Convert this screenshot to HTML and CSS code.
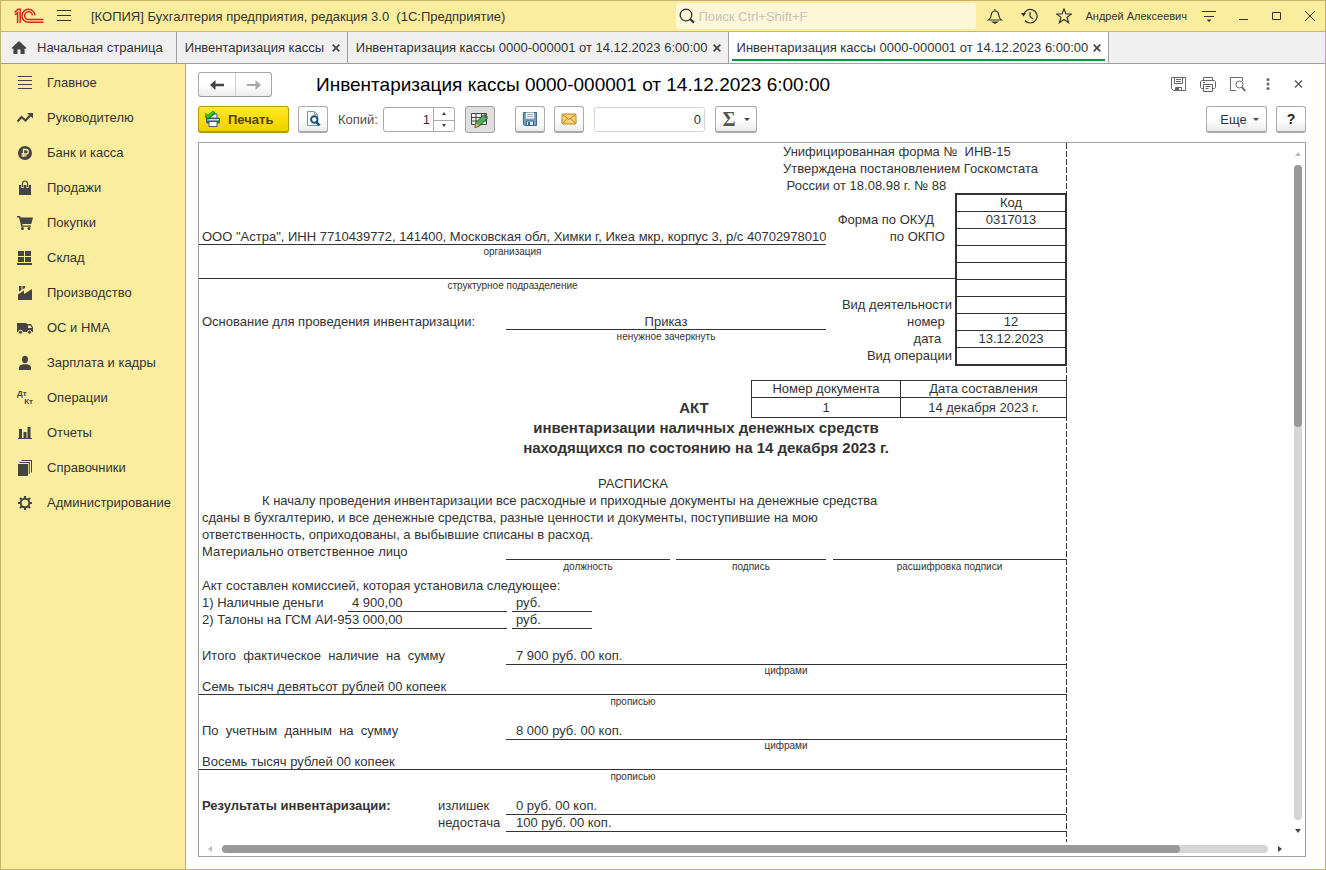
FILE: index.html
```html
<!DOCTYPE html>
<html lang="ru">
<head>
<meta charset="utf-8">
<title>Инвентаризация кассы</title>
<link rel="stylesheet" href="styles.css">
</head>
<body>
<header class="titlebar">
  <svg class="logo" width="30" height="16" viewBox="0 0 30 16" fill="none" stroke="#d8261c" stroke-width="1.5"><path d="M.5 4.500 4 1.200h2.200V15M1 6.800l2.600-2.200V15"/><path d="M21 7.600A6.500 6.500 0 1 0 14.600 14.300H29.500"/><path d="M18.400 7.400a3.900 3.900 0 1 0-3.900 4.100h15"/></svg>
  <button class="bare menu" aria-label="Меню"><svg width="14" height="12" viewBox="0 0 14 12" stroke="#333"><path d="M0 .5h14M0 5.500h14M0 10.500h14"/></svg></button>
  <div class="app-name">[КОПИЯ] Бухгалтерия предприятия, редакция 3.0&nbsp; (1С:Предприятие)</div>
  <label class="search">
    <svg width="16" height="16" viewBox="0 0 16 16" fill="none" stroke="#333"><circle cx="7" cy="7" r="5.800" stroke-width="1.300"/><path d="m11 11 4 3.600" stroke-width="2.200"/></svg>
    <input type="text" placeholder="Поиск Ctrl+Shift+F" aria-label="Поиск">
  </label>
  <div class="title-tools">
    <button class="bare" aria-label="Уведомления"><svg width="16" height="16" viewBox="0 0 16 16" fill="none" stroke="#333" stroke-width="1.2"><path d="M1.500 12c2-1.300 2.600-3 2.800-5C4.500 4.500 5.500 3 8 3s3.500 1.500 3.700 4c.2 2 .8 3.700 2.800 5zM8 3V1"/><path d="M6 14h4l-2 1.200z" fill="#333"/></svg></button>
    <button class="bare" aria-label="История"><svg width="17" height="16" viewBox="0 0 17 16" fill="none" stroke="#333" stroke-width="1.2"><path d="M2.500 7.500A6.800 6.800 0 1 1 4 12.500M9 4v4.500l3 2.500"/><path d="M0 5h5L2.500 8.500z" fill="#333" stroke="none"/></svg></button>
    <button class="bare" aria-label="Избранное"><svg width="16" height="16" viewBox="0 0 16 16" fill="none" stroke="#333" stroke-width="1.200"><path d="m8 1 2 5h5.300L11 9.400l1.600 5.300L8 11.500l-4.600 3.200L5 9.400.7 6H6z"/></svg></button>
    <span class="user">Андрей Алексеевич</span>
    <button class="bare" aria-label="Настройки"><svg width="14" height="14" viewBox="0 0 14 14" stroke="#333"><path d="M0 2.500h14M2 7.500h10"/><path d="M4.500 10.500h5L7 13z" fill="#333" stroke="none"/></svg></button>
    <button class="bare win" aria-label="Свернуть"><svg width="10" height="10" viewBox="0 0 10 10" stroke="#333"><path d="M0 8.500h9"/></svg></button>
    <button class="bare win" aria-label="Развернуть"><svg width="10" height="10" viewBox="0 0 10 10" fill="none" stroke="#333"><path d="M.5 1.500h8v7h-8z"/></svg></button>
    <button class="bare win" aria-label="Закрыть"><svg width="10" height="10" viewBox="0 0 10 10" stroke="#333"><path d="m0 0 10 10M10 0 0 10"/></svg></button>
  </div>
</header>

<nav class="tabs">
  <a class="tab home" href="#"><svg width="16" height="14" viewBox="0 0 16 14" fill="#444"><path d="M8 0 15.500 7l-1 1-.9-.8V13H9.500V8.500h-3V13H2.400V7.200l-.9.8-1-1z"/></svg>Начальная страница</a>
  <div class="tab"><a href="#">Инвентаризация кассы</a><button class="bare close" aria-label="Закрыть вкладку"><svg width="8" height="8" viewBox="0 0 8 8" stroke="#444" stroke-width="1.700"><path d="m.7.700 6.600 6.600M7.300.700.700 7.300"/></svg></button></div>
  <div class="tab"><a href="#">Инвентаризация кассы 0000-000001 от 14.12.2023 6:00:00</a><button class="bare close" aria-label="Закрыть вкладку"><svg width="8" height="8" viewBox="0 0 8 8" stroke="#444" stroke-width="1.700"><path d="m.7.700 6.600 6.600M7.300.700.700 7.300"/></svg></button></div>
  <div class="tab active"><a href="#">Инвентаризация кассы 0000-000001 от 14.12.2023 6:00:00</a><button class="bare close" aria-label="Закрыть вкладку"><svg width="8" height="8" viewBox="0 0 8 8" stroke="#444" stroke-width="1.700"><path d="m.7.700 6.600 6.600M7.300.700.700 7.300"/></svg></button></div>
</nav>

<div class="workspace">
  <nav class="sidebar">
    <a href="#"><svg viewBox="0 0 16 16" stroke="#444"><path d="M1 1.500h14M1 5.500h14M1 9.500h14M1 13.500h14"/></svg>Главное</a>
    <a href="#"><svg viewBox="0 0 16 16" fill="none" stroke="#444" stroke-width="2.200"><path d="m.5 11.500 4-4.500 4 3.500 5-5.500"/><path d="M10 3h6v5.500z" fill="#444" stroke="none"/></svg>Руководителю</a>
    <a href="#"><svg viewBox="0 0 16 16"><circle cx="8" cy="8" r="7" fill="#444"/><path d="M6.500 12V4.500H9a2.200 2.200 0 0 1 0 4.500H4.500M4.500 10.800h5" fill="none" stroke="#fbed9e" stroke-width="1.300"/></svg>Банк и касса</a>
    <a href="#"><svg viewBox="0 0 16 16"><path d="M2 5h12v10H2z" fill="#444"/><path d="M5.500 8V3.500a2.500 2.500 0 0 1 5 0V8" fill="none" stroke="#fbed9e" stroke-width="2.400"/><path d="M5.500 7V3.500a2.500 2.500 0 0 1 5 0V7" fill="none" stroke="#444" stroke-width="1.200"/></svg>Продажи</a>
    <a href="#"><svg viewBox="0 0 16 16" fill="#444"><path d="M0 1h3l.6 1.500H16L14.300 9H5.200l.4 1.400H14v1.400H4.300L2 2.400H0z"/><circle cx="5.500" cy="13.500" r="1.500"/><circle cx="12" cy="13.500" r="1.500"/></svg>Покупки</a>
    <a href="#"><svg viewBox="0 0 16 16" fill="#444"><path d="M1 1h6v5H1zM8 1h6v5H8zM1 7h6v5H1zM8 7h6v5H8zM0 13h15v2H0z"/></svg>Склад</a>
    <a href="#"><svg viewBox="0 0 16 16" fill="#444"><path d="M1 15V9.500L7 5.500V9l8-5v11zM2 1h2.500v4L2 6.500zM5.500 1H8v2L5.500 4.500z"/></svg>Производство</a>
    <a href="#"><svg viewBox="0 0 16 16" fill="#444"><path d="M0 3h9.500v1H14l2 3.500V12H0z"/><path d="M11 5.500h2.500L15 8h-4z" fill="#fbed9e"/><circle cx="3.500" cy="12.200" r="2" stroke="#fbed9e"/><circle cx="12.500" cy="12.200" r="2" stroke="#fbed9e"/></svg>ОС и НМА</a>
    <a href="#"><svg viewBox="0 0 16 16" fill="#444"><ellipse cx="8" cy="4.500" rx="3" ry="3.700"/><path d="M2 15v-2.500C2 10.500 4 10 6 9.300h4c2 .7 4 1.200 4 3.200V15z"/></svg>Зарплата и кадры</a>
    <a href="#"><span class="dtkt"><b>Дт</b><b>Кт</b></span>Операции</a>
    <a href="#"><svg viewBox="0 0 16 16" fill="#444"><path d="M2 4h3v9H2zM6.500 7h3v6h-3zM10.500 2h3v11h-3zM1 13h14v1H1z"/></svg>Отчеты</a>
    <a href="#"><svg viewBox="0 0 16 16" fill="#444"><path d="M1 4h10v12H1zM2.500 2h10.300v12h-1V3H2.500zM4.500 0H15v12.500h-1V1H4.500z"/></svg>Справочники</a>
    <a href="#"><svg viewBox="0 0 16 16" fill="none" stroke="#444"><circle cx="8" cy="8" r="4.300" stroke-width="2"/><path d="M8 1v2.500M8 12.500V15M1 8h2.500M12.500 8H15M3 3l1.800 1.800M11.200 11.200 13 13M13 3l-1.800 1.800M4.800 11.200 3 13" stroke-width="2.200"/></svg>Администрирование</a>
  </nav>

  <main class="content">
    <div class="heading">
      <div class="history">
        <button aria-label="Назад"><svg width="14" height="10" viewBox="0 0 14 10"><path d="M0 5 5.500 0v3.700H14v2.600H5.500V10z" fill="#444"/></svg></button>
        <button aria-label="Вперед"><svg width="14" height="10" viewBox="0 0 14 10"><path d="M14 5 8.500 0v4H0v2h8.500v4z" fill="#aaa"/></svg></button>
      </div>
      <h1>Инвентаризация кассы 0000-000001 от 14.12.2023 6:00:00</h1>
      <div class="page-tools">
        <button class="bare" aria-label="Сохранить"><svg width="16" height="16" viewBox="0 0 16 16" fill="none" stroke="#666"><path d="M1.500.5h14v13h-12l-2-2zM4.500.5v6h8v-6M6 2.500h5M6 4.500h5M5.500 13.500v-3h6v3"/><path d="M6 11h3v3H6z" fill="#666" stroke="none"/></svg></button>
        <button class="bare" aria-label="Печать"><svg width="16" height="16" viewBox="0 0 16 16" fill="none" stroke="#666"><path d="M3.500 3.500v-3h9v3M3.500 11.500h-2l-1-1v-6l1-1h13l1 1v6l-1 1h-2"/><path d="M3.500 7.500h9v7h-9zM5.500 9.500h5M5.500 11.500h3M3 5.500h2"/></svg></button>
        <button class="bare" aria-label="Просмотр"><svg width="16" height="16" viewBox="0 0 16 16" fill="none" stroke="#666"><path d="M6 13.500H.5V.5h12V4"/><circle cx="9.500" cy="7.500" r="3.500"/><path d="m12 10 3 4" stroke-width="1.800"/></svg></button>
        <button class="bare" aria-label="Ещё"><svg width="16" height="16" viewBox="0 0 16 16" fill="#666"><circle cx="8" cy="2.500" r="1.500"/><circle cx="8" cy="7" r="1.500"/><circle cx="8" cy="11.500" r="1.500"/></svg></button>
        <button class="bare" aria-label="Закрыть"><svg width="16" height="16" viewBox="0 0 16 16" stroke="#555" stroke-width="1.200"><path d="m5 3.500 7 7M12 3.500l-7 7"/></svg></button>
      </div>
    </div>

    <div class="toolbar">
      <button class="btn print"><svg width="16" height="16" viewBox="0 0 16 16"><path d="M4 6V3h8v4" fill="#fff" stroke="#3d607c"/><rect x="1" y="6.500" width="14" height="6" rx="1.500" fill="#3d607c"/><path d="M2 8h12v1.500H2z" fill="#c8dbe8"/><path d="M4 10.500h8v5H4z" fill="#fff" stroke="#3d607c"/><path d="M0 3.500 3 6.500 9.500.8" fill="none" stroke="#167a12" stroke-width="3.600"/><path d="M.8 3.500 3 5.800 8.800 1" fill="none" stroke="#35c82b" stroke-width="2"/></svg>Печать</button>
      <button class="btn icon" aria-label="Предварительный просмотр"><svg width="16" height="16" viewBox="0 0 16 16" fill="none"><path d="M2.500.5h7l3 3v11h-10z" fill="#fff" stroke="#7b96a8"/><path d="M9.500.5v3h3" stroke="#7b96a8"/><circle cx="9.300" cy="8.500" r="3.200" fill="#fff" stroke="#11507c" stroke-width="2"/><path d="m11.500 11 3 3.500" stroke="#11507c" stroke-width="2.600"/></svg></button>
      <label class="copies-label" for="copies">Копий:</label>
      <div class="spinner"><input id="copies" type="text" value="1"><div class="steps"><button aria-label="Больше"><svg width="4" height="3" viewBox="0 0 4 3"><path d="M0 3 2 0l2 3z" fill="#444"/></svg></button><button aria-label="Меньше"><svg width="4" height="3" viewBox="0 0 4 3"><path d="m0 0 2 3 2-3z" fill="#444"/></svg></button></div></div>
      <button class="btn icon pressed" aria-label="Редактирование"><svg width="17" height="16" viewBox="0 0 17 16"><path d="M.5 1.500h15v11H.5zM.5 5.500h15M.5 9h15M5 1.500v11M10.500 1.500v11" fill="#eee" stroke="#444"/><path d="m5 10.500 7.500-7.500 3.500 3.500-7.500 7.500-4.500 1.500z" fill="#4caf50" stroke="#17603a"/><path d="m5 10.500 3.500 3.500L4 15.500z" fill="#e9b57a" stroke="#8a5a2a" stroke-width=".6"/><path d="m12.500 3 1.500-1.200L17 5l-1 1.500z" fill="#555"/></svg></button>
      <button class="btn icon save" aria-label="Сохранить файл"><svg width="16" height="16" viewBox="0 0 16 16"><path d="M1.500 1.500h13v13h-12l-1-1z" fill="#6f9fce" stroke="#3e6790"/><path d="M4 1.500h8v6H4z" fill="#fff"/><path d="M5 3.500h6M5 5.500h6" stroke="#9ab"/><path d="M4.500 10h7v4.500h-7z" fill="#dce8f2" stroke="#3e6790"/><path d="M6 11h2v3H6z" fill="#3e6790"/></svg></button>
      <button class="btn icon" aria-label="Отправить по почте"><svg width="16" height="12" viewBox="0 0 16 12"><rect x="1" y="1" width="14" height="10" rx="1" fill="#fbd377" stroke="#c17f16"/><path d="m1.500 1.500 6.500 5 6.500-5M1.500 10.500 6 5.500M14.500 10.500 10 5.500" fill="none" stroke="#c17f16"/></svg></button>
      <input class="sum" type="text" value="0" aria-label="Сумма выделенных ячеек">
      <button class="btn sigma" aria-label="Вычислить сумму"><span class="sigma-sign">Σ</span><svg width="6" height="3" viewBox="0 0 6 3"><path d="M0 0h6L3 3z" fill="#444"/></svg></button>
      <button class="btn more">Еще<svg width="6" height="3" viewBox="0 0 6 3"><path d="M0 0h6L3 3z" fill="#444"/></svg></button>
      <button class="btn icon help">?</button>
    </div>

    <div class="viewer">
      <div class="viewport">
        <article class="sheet">
          <div class="approval">Унифицированная форма №&nbsp; ИНВ-15<br>Утверждена постановлением Госкомстата<br>&nbsp;России от 18.08.98 г. № 88</div>
          <section class="form-head">
            <div class="head-grid">
              <span class="c3 r2 right">Форма по ОКУД     </span>
              <span class="wide r3 line clip">ООО "Астра", ИНН 7710439772, 141400, Московская обл, Химки г, Икеа мкр, корпус 3, р/с 40702978010</span>
              <span class="c3 r3 right">по ОКПО  </span>
              <small class="wide r4">организация</small>
              <span class="full r5 line"></span>
              <small class="wide r6">структурное подразделение</small>
              <span class="c3 r7 right">Вид деятельности</span>
              <span class="c1 r8">Основание для проведения инвентаризации:</span>
              <span class="c2 r8 line center">Приказ</span>
              <span class="c3 r8 right">номер  </span>
              <small class="c2 r9">ненужное зачеркнуть</small>
              <span class="c3 r9 right">дата   </span>
              <span class="c3 r10 right">Вид операции</span>
            </div>
            <table class="codes">
              <tr><th>Код</th></tr><tr><td>0317013</td></tr><tr><td></td></tr><tr><td></td></tr><tr><td></td></tr><tr><td></td></tr><tr><td></td></tr><tr><td>12</td></tr><tr><td>13.12.2023</td></tr><tr><td></td></tr>
            </table>
          </section>

          <section class="act">
            <h2>АКТ</h2>
            <table class="docnum">
              <tr><th>Номер документа</th><th>Дата составления</th></tr>
              <tr><td>1</td><td>14 декабря 2023 г.</td></tr>
            </table>
          </section>
          <h2 class="subject">инвентаризации наличных денежных средств<br>находящихся по состоянию на 14 декабря 2023 г.</h2>

          <h3>РАСПИСКА</h3>
          <p class="receipt">К началу проведения инвентаризации все расходные и приходные документы на денежные средства<br>сданы в бухгалтерию, и все денежные средства, разные ценности и документы, поступившие на мою<br>ответственность, оприходованы, а выбывшие списаны в расход.</p>
          <div class="row sign"><span>Материально ответственное лицо</span><span class="line"></span><span class="line"></span><span class="line"></span></div>
          <div class="row sign notes"><small></small><small>должность</small><small>подпись</small><small>расшифровка подписи</small></div>
          <p>Акт составлен комиссией, которая установила следующее:</p>
          <div class="row item"><span>1) Наличные деньги</span><span class="line">4 900,00</span><span class="line">руб.</span></div>
          <div class="row item"><span>2) Талоны на ГСМ АИ-95</span><span class="line">3 000,00</span><span class="line">руб.</span></div>

          <div class="row total first"><span>Итого  фактическое  наличие  на  сумму</span><span class="line">7 900 руб. 00 коп.</span></div>
          <div class="row total notes"><small></small><small>цифрами</small></div>
          <div class="row words line">Семь тысяч девятьсот рублей 00 копеек</div>
          <small class="note">прописью</small>

          <div class="row total"><span>По  учетным  данным  на  сумму</span><span class="line">8 000 руб. 00 коп.</span></div>
          <div class="row total notes"><small></small><small>цифрами</small></div>
          <div class="row words line">Восемь тысяч рублей 00 копеек</div>
          <small class="note">прописью</small>

          <div class="row result"><b>Результаты инвентаризации:</b><span>излишек</span><span class="line">0 руб. 00 коп.</span></div>
          <div class="row result"><b></b><span>недостача</span><span class="line">100 руб. 00 коп.</span></div>
        </article>
      </div>
      <div class="vscroll"><svg width="6" height="4" viewBox="0 0 6 4"><path d="m0 4 3-4 3 4z" fill="#bbb"/></svg><div class="track"><div class="thumb"></div></div><svg width="6" height="4" viewBox="0 0 6 4"><path d="M0 0h6L3 4z" fill="#444"/></svg></div>
      <div class="hscroll"><svg width="4" height="6" viewBox="0 0 4 6"><path d="M4 0v6L0 3z" fill="#bbb"/></svg><div class="track"><div class="thumb"></div></div><svg width="4" height="6" viewBox="0 0 4 6"><path d="M0 0v6l4-3z" fill="#444"/></svg></div>
    </div>
  </main>
</div>
</body>
</html>
```
FILE: styles.css
```css
* { box-sizing: border-box; }
body { margin: 0; height: 100vh; display: flex; flex-direction: column; overflow: hidden; border: 1px solid #c3b66c; background: #fff; color: #333; font: 13px "Liberation Sans", Arial, sans-serif; }
button, input { font: inherit; color: inherit; }
button { padding: 0; }
a { color: inherit; text-decoration: none; }
svg { display: block; flex: none; }
h1, h2, h3, p { margin: 0; font-weight: normal; font-size: 13px; }
.bare { border: 0; background: none; display: flex; align-items: center; justify-content: center; }

.titlebar { display: flex; align-items: center; height: 31px; flex: none; background: #fbed9e; border-bottom: 1px solid #c8b66a; padding: 0 10px 0 13px; white-space: nowrap; }
.menu { margin-left: 13px; }
.app-name { margin-left: 20px; flex: 1; font-size: 13px; }
.search { display: flex; align-items: center; gap: 3px; width: 300px; height: 26px; padding-left: 3px; background: #fdf6d7; border-radius: 3px; }
.search input { border: 0; background: none; outline: 0; flex: 1; min-width: 0; padding: 0; }
.search input::placeholder { color: #c6c4bd; }
.title-tools { display: flex; align-items: center; gap: 18px; margin-left: 11px; }
.user { font-size: 11px; margin: 0 -3px 0 -5px; }
.win { width: 10px; margin-left: 5px; }

.tabs { display: flex; height: 32px; flex: none; background: #f0f0f0; border-bottom: 1px solid #a0a0a0; white-space: nowrap; }
.tab { display: flex; align-items: center; justify-content: space-between; gap: 5px; min-width: 171px; padding: 0 7px 0 8px; border-right: 1px solid #a0a0a0; }
.tab.home { gap: 10px; padding: 0 13px 0 10px; }
.tab.active { background: #fff; position: relative; }
.tab.active::after { content: ""; position: absolute; left: 3px; right: 3px; bottom: 2px; height: 2px; background: #009646; }

.workspace { flex: 1; display: flex; min-height: 0; }
.sidebar { width: 185px; flex: none; background: #fbed9e; border-right: 1px solid #c0b060; padding-top: 1px; }
.sidebar a { display: flex; align-items: center; gap: 14px; height: 35px; padding-left: 16px; white-space: nowrap; }
.sidebar svg { width: 16px; height: 16px; }
.dtkt { width: 16px; font-size: 8px; line-height: 8px; color: #444; }
.dtkt b { display: block; }
.dtkt b + b { text-align: right; }

.content { flex: 1; min-width: 0; display: flex; flex-direction: column; padding: 8px 19px 12px 12px; }
.heading { display: flex; align-items: center; height: 25px; }
.history { display: flex; border: 1px solid #a8a8a8; border-bottom-color: #999; border-radius: 3px; height: 25px; background: linear-gradient(#fff, #fff 50%, #ececec); }
.history button { width: 36px; border: 0; background: none; display: flex; align-items: center; justify-content: center; }
.history button + button { border-left: 1px solid #d0d0d0; }
h1 { margin-left: 44px; flex: 1; font-size: 19px; color: #000; white-space: nowrap; }
.page-tools { display: flex; gap: 14px; }

.toolbar { display: flex; align-items: center; margin: 9px 0 9px; height: 27px; }
.btn { display: flex; align-items: center; justify-content: center; height: 27px; border: 1px solid #ababab; border-bottom: 2px solid #a8a8a8; border-radius: 3px; background: linear-gradient(#fff, #fff 50%, #ececec); }
.icon { width: 30px; margin-left: 9px; }
.print { width: 91px; gap: 7px; justify-content: flex-start; padding-left: 6px; border-color: #b39e00; background: linear-gradient(#ffe633, #fadb00 60%, #ecd000); font-weight: bold; color: #4d4610; }
.copies-label { margin: 0 5px 0 10px; color: #4d4d4d; }
.spinner { display: flex; width: 72px; height: 25px; border: 1px solid #aaa; border-radius: 3px; }
.spinner input { flex: 1; min-width: 0; border: 0; padding: 0 3px; background: none; text-align: right; outline: 0; }
.steps { width: 21px; border-left: 1px solid #aaa; display: grid; grid-template-rows: 1fr 1fr; }
.steps button { border: 0; background: none; display: flex; align-items: center; justify-content: center; }
.steps button + button { border-top: 1px solid #aaa; }
.pressed { background: #dfdfdf; border: 1px solid #a0a0a0; margin-left: 10px; }
.save { margin-left: 20px; }
.sum { width: 111px; height: 25px; margin-left: 10px; border: 1px solid #d5d5d5; border-radius: 3px; padding: 0 3px; text-align: right; background: #fff; }
.sigma { width: 42px; margin-left: 10px; gap: 8px; }
.sigma-sign { font: bold 20px "Liberation Serif", serif; color: #555; }
.more { width: 61px; margin-left: auto; gap: 6px; padding-left: 6px; }
.help { font-weight: bold; font-size: 14px; color: #222; }

.viewer { flex: 1; min-height: 0; display: grid; grid-template: minmax(0, 1fr) 14px / minmax(0, 1fr) 15px; border: 1px solid #a0a0a0; }
.viewport { overflow: hidden; }
.vscroll { display: flex; flex-direction: column; align-items: center; padding: 9px 0; gap: 9px; }
.vscroll .track { width: 8px; flex: 1; }
.vscroll .thumb { height: 40%; }
.hscroll { grid-column: 1 / 3; display: flex; align-items: center; padding: 0 23px 0 9px; gap: 10px; }
.hscroll .track { height: 8px; flex: 1; }
.hscroll .thumb { width: 91.6%; height: 8px; }
.track { background: #d5d5d5; border-radius: 4px; }
.thumb { background: #999; border-radius: 4px; }

.sheet { width: 868px; min-height: 100%; line-height: 17px; white-space: pre; background: repeating-linear-gradient(#333 0 6px, #fff 6px 8px) right top / 1px 100% no-repeat; display: flex; flex-direction: column; }
.sheet small { font-size: 10px; line-height: 14px; text-align: center; display: block; }
.sheet p { padding-left: 3px; }
.line { border-bottom: 1px solid #333; }
.center { text-align: center; }
.right { text-align: right; padding-right: 4px; }
.clip { overflow: hidden; padding-left: 3px; }
.approval { padding-left: 584px; }

.form-head { display: grid; grid-template-columns: 757px 112px; align-items: start; }
.head-grid { display: grid; grid-template: repeat(10, 17px) / 307px 320px 1fr; }
.c1 { grid-column: 1; padding-left: 3px; }
.c2 { grid-column: 2; }
.c3 { grid-column: 3; }
.wide { grid-column: 1 / 3; }
.full { grid-column: 1 / 4; }
.r2 { grid-row: 2; } .r3 { grid-row: 3; } .r4 { grid-row: 4; } .r5 { grid-row: 5; } .r6 { grid-row: 6; }
.r7 { grid-row: 7; } .r8 { grid-row: 8; } .r9 { grid-row: 9; } .r10 { grid-row: 10; }

.sheet table { border-collapse: collapse; text-align: center; white-space: nowrap; }
.sheet th, .sheet td { padding: 0; font-weight: normal; border: 1px solid #333; line-height: 16px; height: 17px; }
.sheet .codes { width: 112px; margin: -1px 0 -2px -1px; border: 2px solid #333; }

.act { display: grid; grid-template-columns: 438px 114px 1fr; margin-top: 16px; align-items: end; }
.act h2 { grid-column: 2; text-align: center; }
.sheet h2 { font-size: 15px; font-weight: bold; line-height: 20px; }
.docnum th:first-child { width: 149px; }
.sheet .docnum td { height: 20px; line-height: 19px; }
.subject { margin-left: 146px; text-align: center; }
h3 { margin-top: 17px; text-align: center; }
.receipt { text-indent: 60px; }

.row { display: grid; height: 17px; }
.row.notes { height: 14px; }
.row > :first-child { padding-left: 3px; }
.sign { grid-template-columns: 307px 164px 150px 233px; }
.sign > :nth-child(3) { margin: 0 -6px 0 6px; }
.sign > :nth-child(4) { margin: 0 -13px 0 13px; }
.row.sign.notes { height: 17px; }
.item { grid-template-columns: 149px 159px 80px; }
.item > :nth-child(2) { padding-left: 4px; }
.item > :nth-child(3) { margin: 0 -5px 0 5px; padding-left: 4px; }
.total { grid-template-columns: 307px 560px; }
.total > .line, .result > .line { padding-left: 10px; }
.total.first { margin-top: 19px; }
.words { padding-left: 3px; }
.note { margin-bottom: 13px; }
.result { grid-template-columns: 239px 68px 560px; }
```
